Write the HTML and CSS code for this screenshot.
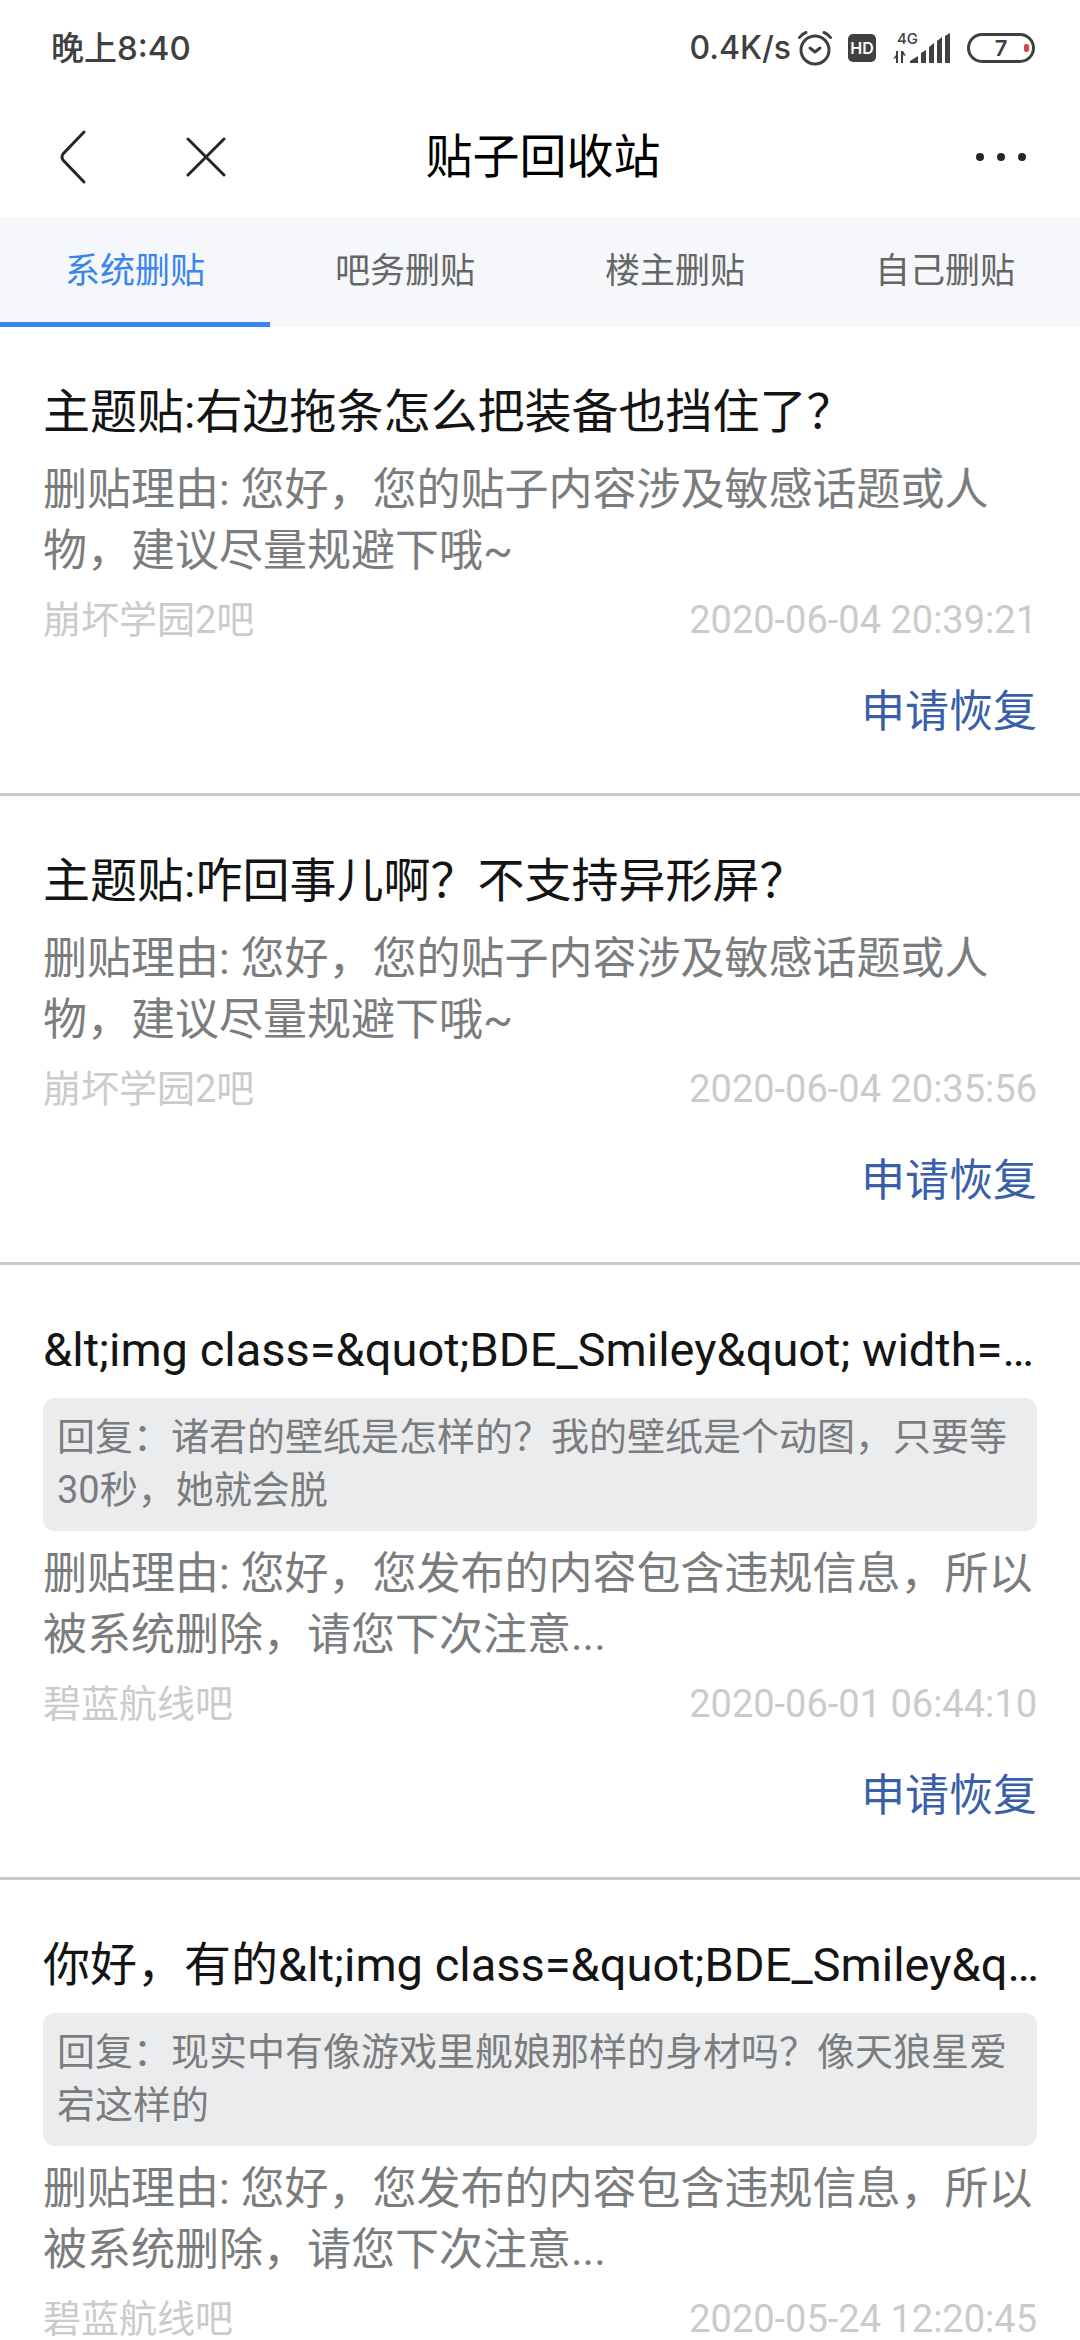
FILE: index.html
```
<!DOCTYPE html>
<html lang="zh-CN">
<head>
    <meta charset="UTF-8">
    <meta name="viewport" content="width=device-width, initial-scale=1">
    <title>贴子回收站</title>
    <link rel="stylesheet" href="styles.css">
</head>
<body>
    <div class="app">
        <div class="status-bar">
            <span class="status-time">晚上8:40</span>
            <div class="status-right">
                <span class="status-speed">0.4K/s</span>
                <svg class="icon-alarm" width="36" height="36" viewBox="0 0 36 36" fill="none" stroke="#404040" stroke-width="3" stroke-linecap="round" stroke-linejoin="round">
                    <circle cx="18" cy="20" r="14"/>
                    <path d="M13 18l5 4 5-4M2.500 7.500Q5 4 9 2.500M33.500 7.500Q31 4 27 2.500"/>
                </svg>
                <span class="hd">HD</span>
                <svg class="icon-signal" width="58" height="40" viewBox="0 -4 58 40" fill="#404040">
                    <text x="4" y="12" font-family="Inter, sans-serif" font-size="15" font-weight="500">4G</text>
                    <path d="M5 19v12h-2v-5l-3 1 3-4v-4zM8 31V19h2l3 5-3-1v8z"/>
                    <path d="M17 31v-2l8-5v7zM28 31V21l5-3v13zM36 31V15l5-4v20zM44 31V9l5-4v26zM52 31V4l5-3v30z"/>
                </svg>
                <span class="battery">7<i class="battery-level"></i></span>
            </div>
        </div>

        <header class="nav">
            <div class="nav-left">
                <button class="nav-btn" aria-label="返回">
                    <svg width="26" height="54" viewBox="0 0 26 54" fill="none" stroke="#262626" stroke-width="3" stroke-linecap="round">
                        <path d="M24 2L3 24Q1 27 3 30L24 52"/>
                    </svg>
                </button>
                <button class="nav-btn" aria-label="关闭">
                    <svg width="40" height="40" viewBox="0 0 40 40" fill="none" stroke="#262626" stroke-width="3" stroke-linecap="round">
                        <path d="M2 2l36 36M38 2L2 38"/>
                    </svg>
                </button>
            </div>
            <h1 class="nav-title">贴子回收站</h1>
            <button class="nav-btn nav-more" aria-label="更多">
                <svg width="50" height="8" viewBox="0 0 50 8" fill="#262626">
                    <circle cx="4" cy="4" r="4"/>
                    <circle cx="25" cy="4" r="4"/>
                    <circle cx="46" cy="4" r="4"/>
                </svg>
            </button>
        </header>

        <nav class="tabs">
            <button class="tab active">系统删贴</button>
            <button class="tab">吧务删贴</button>
            <button class="tab">楼主删贴</button>
            <button class="tab">自己删贴</button>
        </nav>

        <main class="list">
            <article class="item">
                <h2 class="item-title">主题贴:右边拖条怎么把装备也挡住了？</h2>
                <p class="reason">删贴理由: 您好，您的贴子内容涉及敏感话题或人物，建议尽量规避下哦~</p>
                <div class="meta">
                    <span>崩坏学园2吧</span>
                    <time>2020-06-04 20:39:21</time>
                </div>
                <a class="restore" href="#">申请恢复</a>
            </article>

            <article class="item">
                <h2 class="item-title">主题贴:咋回事儿啊？不支持异形屏？</h2>
                <p class="reason">删贴理由: 您好，您的贴子内容涉及敏感话题或人物，建议尽量规避下哦~</p>
                <div class="meta">
                    <span>崩坏学园2吧</span>
                    <time>2020-06-04 20:35:56</time>
                </div>
                <a class="restore" href="#">申请恢复</a>
            </article>

            <article class="item">
                <h2 class="item-title">&amp;lt;img class=&amp;quot;BDE_Smiley&amp;quot; width=…</h2>
                <p class="quote">回复：诸君的壁纸是怎样的？我的壁纸是个动图，只要等30秒，她就会脱</p>
                <p class="reason">删贴理由: 您好，您发布的内容包含违规信息，所以被系统删除，请您下次注意...</p>
                <div class="meta">
                    <span>碧蓝航线吧</span>
                    <time>2020-06-01 06:44:10</time>
                </div>
                <a class="restore" href="#">申请恢复</a>
            </article>

            <article class="item">
                <h2 class="item-title">你好，有的&amp;lt;img class=&amp;quot;BDE_Smiley&amp;q…</h2>
                <p class="quote">回复：现实中有像游戏里舰娘那样的身材吗？像天狼星爱宕这样的</p>
                <p class="reason">删贴理由: 您好，您发布的内容包含违规信息，所以被系统删除，请您下次注意...</p>
                <div class="meta">
                    <span>碧蓝航线吧</span>
                    <time>2020-05-24 12:20:45</time>
                </div>
            </article>
        </main>
    </div>
</body>
</html>
```
FILE: styles.css
```
* {
    box-sizing: border-box;
}
body {
    margin: 0;
    background: #fff;
    font-family: Roboto, "Noto Sans CJK SC", sans-serif;
}
h1, h2, p {
    margin: 0;
    font-weight: 400;
}
button {
    padding: 0;
    border: 0;
    background: none;
    font-family: inherit;
    cursor: pointer;
}
svg {
    display: block;
}
.app {
    display: flex;
    flex-direction: column;
    height: 100vh;
}

/* status bar */
.status-bar {
    display: flex;
    align-items: center;
    justify-content: space-between;
    flex: none;
    height: 96px;
    padding: 0 45px 0 51px;
    font-family: Inter, "Noto Sans CJK SC", sans-serif;
    font-size: 33px;
    font-weight: 500;
    line-height: 48px;
    color: #404040;
}
.status-right {
    display: flex;
    align-items: center;
}
.status-speed {
    font-size: 32px;
}
.icon-alarm {
    margin-left: 6px;
}
.hd {
    width: 28px;
    height: 28px;
    margin-left: 15px;
    border-radius: 5px;
    background: #404040;
    color: #fff;
    font-size: 16px;
    font-weight: 600;
    line-height: 28px;
    text-align: center;
}
.icon-signal {
    margin-left: 17px;
}
.battery {
    position: relative;
    width: 68px;
    height: 30px;
    margin-left: 16px;
    border: 3px solid #404040;
    border-radius: 15px;
    font-size: 22px;
    font-weight: 600;
    line-height: 24px;
    text-align: center;
}
.battery-level {
    position: absolute;
    top: 8px;
    right: 3px;
    width: 5px;
    height: 8px;
    border-radius: 2px;
    background: #d9434e;
}

/* title bar */
.nav {
    display: grid;
    grid-template-columns: 1fr auto 1fr;
    align-items: center;
    flex: none;
    height: 121px;
    padding: 0 54px 0 60px;
}
.nav-left {
    display: flex;
    align-items: center;
    gap: 100px;
}
.nav-title {
    font-size: 47px;
    line-height: 70px;
    color: #000;
}
.nav-more {
    justify-self: end;
}

/* tabs */
.tabs {
    display: grid;
    grid-template-columns: repeat(4, 1fr);
    flex: none;
    height: 110px;
    background: #f5f7fa;
}
.tab {
    padding-top: 5px;
    border-bottom: 5px solid transparent;
    font-size: 35px;
    line-height: 50px;
    color: #666;
}
.tab.active {
    border-bottom-color: #3a84ed;
    color: #3a84ed;
}

/* deleted posts */
.list {
    flex: 1;
    min-height: 0;
    overflow-y: auto;
    scrollbar-width: none;
}
.item {
    display: flex;
    flex-direction: column;
    padding: 50px 43px;
    border-bottom: 3px solid #c9c9c9;
}
.item-title {
    font-size: 47px;
    line-height: 70px;
    color: #141414;
    white-space: nowrap;
}
.quote {
    margin-top: 13px;
    padding: 13px 14px 14px;
    border-radius: 12px;
    background: #ebecee;
    font-size: 38px;
    line-height: 53px;
    color: #7b7c7e;
}
.reason {
    margin-top: 13px;
    font-size: 44px;
    line-height: 61px;
    color: #7b7c7e;
}
.meta {
    display: flex;
    justify-content: space-between;
    margin-top: 13px;
    font-size: 38px;
    line-height: 50px;
    color: #cacbcd;
}
.restore {
    align-self: flex-end;
    margin-top: 37px;
    font-size: 44px;
    line-height: 61px;
    color: #385fa8;
    text-decoration: none;
}
```
